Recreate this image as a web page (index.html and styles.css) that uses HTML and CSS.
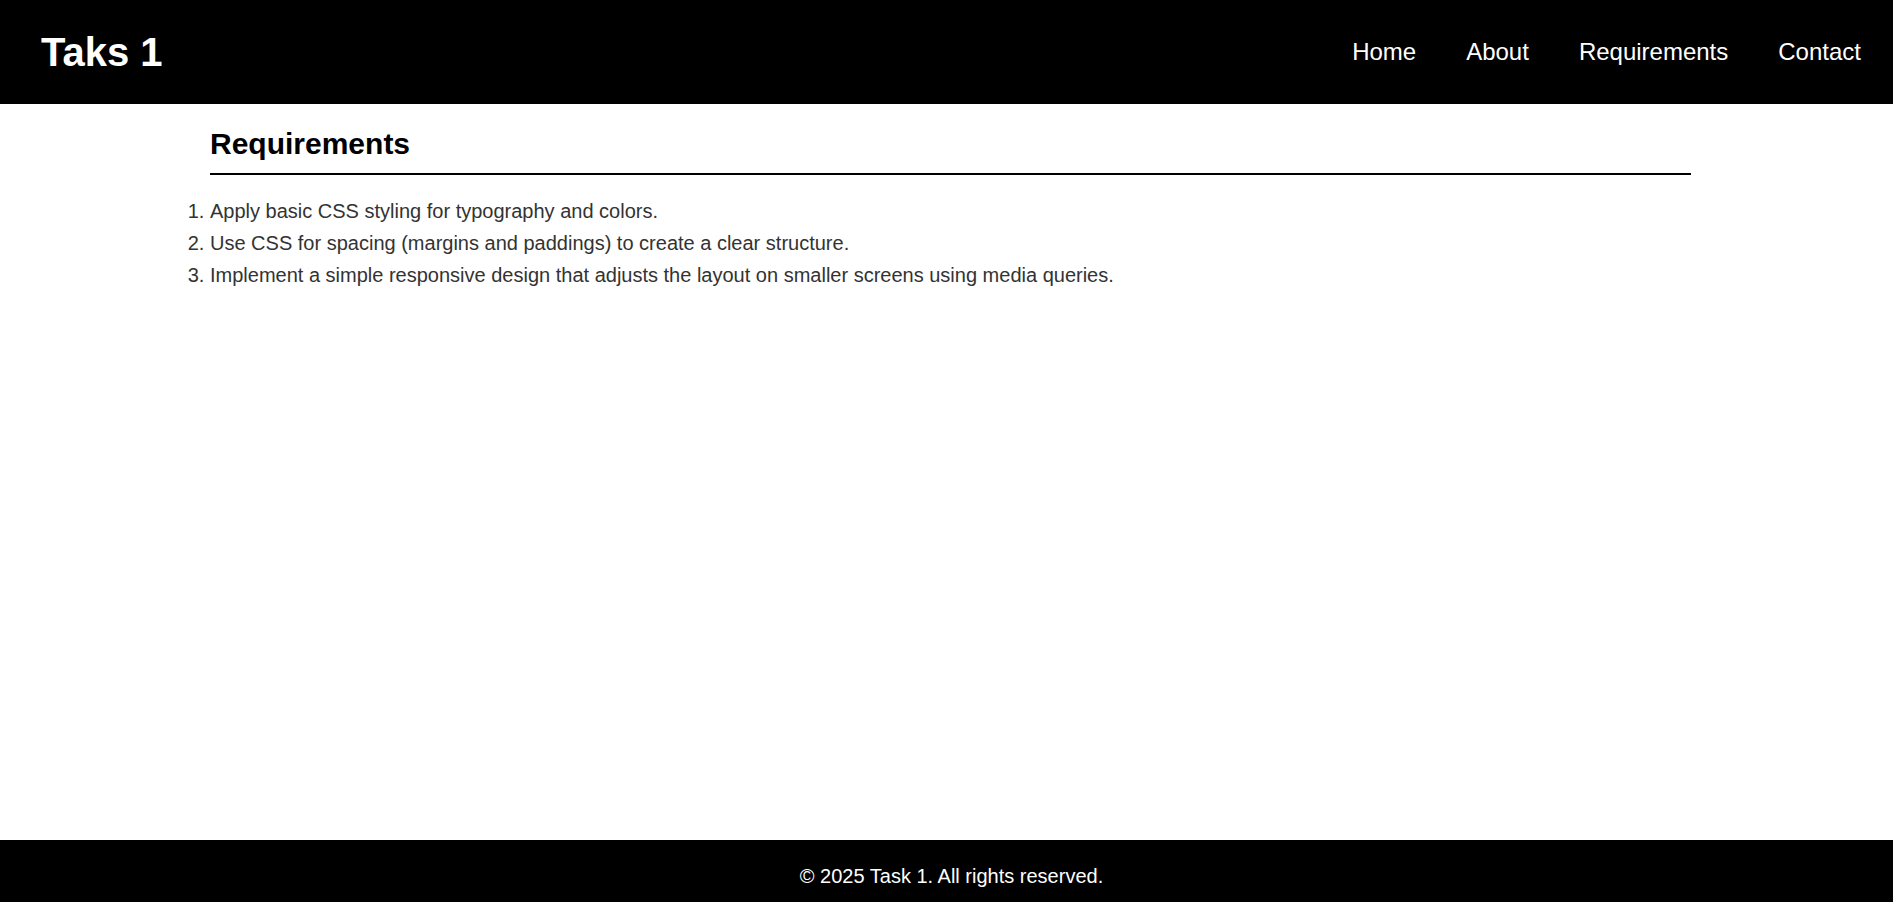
FILE: index.html
```html
<!DOCTYPE html>
<html lang="en">
<head>
<meta charset="UTF-8">
<title>Taks 1</title>
<link rel="stylesheet" href="styles.css">
</head>
<body>
  <header class="site-header">
    <h1 class="logo">Taks 1</h1>
    <nav class="nav">
      <a href="#" class="nav-link">Home</a>
      <a href="#" class="nav-link">About</a>
      <a href="#" class="nav-link">Requirements</a>
      <a href="#" class="nav-link">Contact</a>
    </nav>
  </header>
  <main class="content">
    <section class="section">
      <h2 class="section-title">Requirements</h2>
      <ol class="req-list">
        <li>Apply basic CSS styling for typography and colors.</li>
        <li>Use CSS for spacing (margins and paddings) to create a clear structure.</li>
        <li>Implement a simple responsive design that adjusts the layout on smaller screens using media queries.</li>
      </ol>
    </section>
  </main>
  <footer class="site-footer">
    <p class="footer-text">&copy; 2025 Task 1. All rights reserved.</p>
  </footer>
</body>
</html>
```
FILE: styles.css
```css
* {
  box-sizing: border-box;
}

html, body {
  margin: 0;
  padding: 0;
}

body {
  font-family: "Liberation Sans", Arial, sans-serif;
  font-size: 20px;
  line-height: 1.6;
  color: #333;
  background: #fff;
  min-height: 100vh;
  display: flex;
  flex-direction: column;
}

.site-header {
  background: #000;
  color: #fff;
  height: 104px;
  display: flex;
  align-items: center;
  justify-content: space-between;
  padding: 0 32px 0 41px;
}

.logo {
  margin: 0;
  font-size: 40px;
  font-weight: bold;
  line-height: 1;
  color: #fff;
}

.nav {
  display: flex;
  gap: 50px;
}

.nav-link {
  color: #fff;
  text-decoration: none;
  font-size: 24px;
  line-height: 1;
}

.content {
  flex: 1;
  padding: 16px 202px 0 210px;
}

.section-title {
  margin: 0;
  font-size: 30px;
  font-weight: bold;
  color: #000;
  padding-bottom: 5px;
  border-bottom: 2px solid #000;
}

.req-list {
  margin: 20px 0 0;
  padding: 0;
}

.site-footer {
  background: #000;
  color: #fff;
  text-align: center;
  height: 62px;
  padding: 20px 0 0 10px;
  overflow: hidden;
}

.footer-text {
  margin: 0;
}
```
